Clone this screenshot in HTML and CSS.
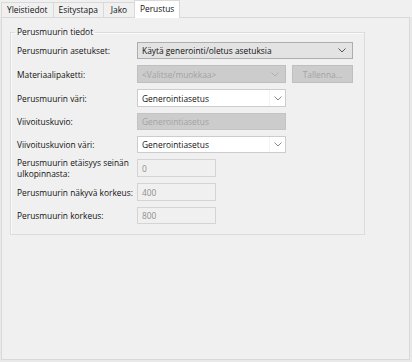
FILE: index.html
```html
<!DOCTYPE html>
<html lang="fi">
<head>
    <meta charset="UTF-8">
    <title>Perustus</title>
    <link rel="stylesheet" href="styles.css">
</head>
<body>
    <div class="tabs">
        <div class="tab">Yleistiedot</div>
        <div class="tab">Esitystapa</div>
        <div class="tab tab-wide">Jako</div>
        <div class="tab active">Perustus</div>
    </div>

    <div class="panel">
        <fieldset class="group">
            <legend>Perusmuurin tiedot</legend>
            <div class="form-grid">
                <label>Perusmuurin asetukset:</label>
                <div class="combo combo-button">
                    <span>Käytä generointi/oletus asetuksia</span>
                    <svg class="arrow" width="8" height="5" viewBox="0 0 8 5"><polyline points="0.5,0.5 4,4 7.5,0.5" /></svg>
                </div>

                <label>Materiaalipaketti:</label>
                <div class="control-pair">
                    <div class="combo combo-disabled">
                        <span>&lt;Valitse/muokkaa&gt;</span>
                        <svg class="arrow" width="8" height="5" viewBox="0 0 8 5"><polyline points="0.5,0.5 4,4 7.5,0.5" /></svg>
                    </div>
                    <div class="button button-disabled">Tallenna...</div>
                </div>

                <label>Perusmuurin väri:</label>
                <div class="combo combo-edit short">
                    <span>Generointiasetus</span>
                    <div class="arrow-box">
                        <svg class="arrow" width="8" height="5" viewBox="0 0 8 5"><polyline points="0.5,0.5 4,4 7.5,0.5" /></svg>
                    </div>
                </div>

                <label>Viivoituskuvio:</label>
                <div class="textbox textbox-disabled short">Generointiasetus</div>

                <label>Viivoituskuvion väri:</label>
                <div class="combo combo-edit short">
                    <span>Generointiasetus</span>
                    <div class="arrow-box">
                        <svg class="arrow" width="8" height="5" viewBox="0 0 8 5"><polyline points="0.5,0.5 4,4 7.5,0.5" /></svg>
                    </div>
                </div>

                <label class="two-line">Perusmuurin etäisyys seinän ulkopinnasta:</label>
                <div class="textbox textbox-readonly narrow">0</div>

                <label>Perusmuurin näkyvä korkeus:</label>
                <div class="textbox textbox-readonly narrow">400</div>

                <label>Perusmuurin korkeus:</label>
                <div class="textbox textbox-readonly narrow">800</div>
            </div>
        </fieldset>
    </div>
</body>
</html>
```

FILE: styles.css
```css
* {
    box-sizing: border-box;
}

body {
    margin: 0;
    width: 412px;
    height: 362px;
    background: #e9e9e9;
    font-family: "Open Sans", "Noto Sans", sans-serif;
    font-size: 8.4px;
    color: #111;
}

.tabs {
    display: flex;
    align-items: flex-end;
    height: 17px;
    padding-left: 1px;
    background: #f0f0f0;
}

.tab {
    height: 15px;
    line-height: 13px;
    padding: 0 5px;
    border: 1px solid #d9d9d9;
    border-bottom: none;
    margin-right: -1px;
    background: #f0f0f0;
    text-align: center;
}

.tab-wide {
    min-width: 32px;
}

.tab.active {
    height: 18px;
    line-height: 16px;
    margin-bottom: -1px;
    padding: 0 5px;
    background: #fff;
    position: relative;
    z-index: 1;
}

.panel {
    height: 343px;
    margin-left: 1px;
    width: 409px;
    padding: 8px 44px 0 8px;
    border: 1px solid #d9d9d9;
    background: #f0f0f0;
}

.group {
    margin: 0;
    padding: 0 11px 10px 6px;
    border: 1px solid #dcdcdc;
    box-shadow: inset 1px 1px 0 #fafafa;
}

.group legend {
    padding: 0 2px;
    margin-left: -2px;
    line-height: 12px;
}

.form-grid {
    display: grid;
    grid-template-columns: 120px 216px;
    grid-template-rows: 17px 18px 18px 17px 17px 18px 18px 17px;
    row-gap: 6px;
    margin-top: 4px;
    align-items: center;
}

.form-grid label {
    line-height: 11px;
}

.two-line {
    padding-right: 2px;
}

.combo,
.textbox,
.button {
    height: 100%;
    display: flex;
    align-items: center;
    white-space: nowrap;
}

.combo {
    justify-content: space-between;
    padding: 0 6px 0 4px;
    border: 1px solid #adadad;
}

.combo-button {
    background: #e3e3e3;
}

.combo-disabled {
    background: #cccccc;
    border-color: #bfbfbf;
    color: #a3a3a3;
}

.combo-disabled .arrow polyline {
    stroke: #b0b0b0;
}

.combo-edit {
    padding: 0 0 0 4px;
    background: #fff;
    border-color: #cccccc;
}

.combo-edit .arrow polyline {
    stroke: #8a8a8a;
}

.arrow-box {
    width: 16px;
    height: 100%;
    display: flex;
    align-items: center;
    justify-content: center;
    border-left: 1px solid #f4f4f4;
}

.arrow polyline {
    fill: none;
    stroke: #555;
    stroke-width: 1;
}

.short {
    width: 149px;
}

.narrow {
    width: 79px;
}

.control-pair {
    height: 100%;
    display: flex;
    gap: 6px;
}

.control-pair .combo {
    width: 149px;
}

.button {
    flex: 1;
    justify-content: center;
    border: 1px solid #bfbfbf;
}

.button-disabled {
    background: #cccccc;
    color: #a3a3a3;
}

.textbox {
    padding: 0 4px;
    border: 1px solid #cccccc;
}

.textbox-disabled {
    background: #cccccc;
    border-color: #c4c4c4;
    color: #a3a3a3;
}

.textbox-readonly {
    background: #f0f0f0;
    border-color: #d4d4d4;
    color: #8f8f8f;
}
```
